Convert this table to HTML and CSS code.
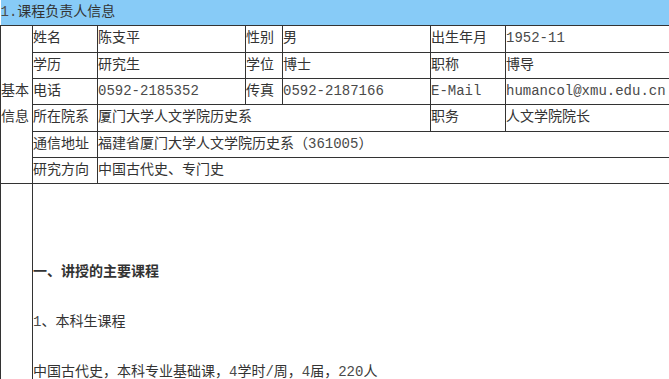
FILE: index.html
```html
<!DOCTYPE html>
<html lang="zh-CN">
<head>
<meta charset="utf-8">
<title>课程负责人信息</title>
<link rel="stylesheet" href="styles.css">
</head>
<body>
<table class="info">
  <colgroup>
    <col class="c1"><col class="c2"><col class="c3"><col class="c4"><col class="c5"><col class="c6"><col class="c7">
  </colgroup>
  <tr class="head-row">
    <td class="head" colspan="7"><span class="mono">1.</span>课程负责人信息</td>
  </tr>
  <tr class="r1">
    <td class="side" rowspan="6">基本信息</td>
    <td>姓名</td><td>陈支平</td><td>性别</td><td>男</td><td>出生年月</td><td class="mono">1952-11</td>
  </tr>
  <tr class="r2">
    <td>学历</td><td>研究生</td><td>学位</td><td>博士</td><td>职称</td><td>博导</td>
  </tr>
  <tr class="r3">
    <td>电话</td><td class="mono">0592-2185352</td><td>传真</td><td class="mono">0592-2187166</td><td class="mono">E-Mail</td><td class="mono">humancol@xmu.edu.cn</td>
  </tr>
  <tr class="r4">
    <td>所在院系</td><td colspan="3">厦门大学人文学院历史系</td><td>职务</td><td>人文学院院长</td>
  </tr>
  <tr class="r5">
    <td>通信地址</td><td colspan="5">福建省厦门大学人文学院历史系（<span class="mono">361005</span>）</td>
  </tr>
  <tr class="r6">
    <td>研究方向</td><td colspan="5">中国古代史、专门史</td>
  </tr>
  <tr class="body-row">
    <td class="blank"></td>
    <td class="content" colspan="6">
      <div class="line strong">一、讲授的主要课程</div>
      <div class="line"><span class="mono">1</span>、本科生课程</div>
      <div class="line">中国古代史，本科专业基础课，<span class="mono">4</span>学时<span class="mono">/</span>周，<span class="mono">4</span>届，<span class="mono">220</span>人</div>
      <div class="line">中国历史文选，本科专业基础课</div>
    </td>
  </tr>
</table>
</body>
</html>
```
FILE: styles.css
```css
html, body {
  margin: 0;
  padding: 0;
  overflow: hidden;
  background: #ffffff;
}
body {
  font-family: "Liberation Mono", "Noto Sans CJK SC", monospace;
  font-size: 14px;
  color: #333333;
}
.info {
  border-collapse: collapse;
  table-layout: fixed;
  width: 720px;
}
.c1 { width: 32px; }
.c2 { width: 65px; }
.c3 { width: 148px; }
.c4 { width: 37px; }
.c5 { width: 148px; }
.c6 { width: 75px; }
.c7 { width: 215px; }
.info td {
  border: 1px solid #333333;
  padding: 0 1px 0 0;
  line-height: 25px;
  vertical-align: middle;
  white-space: nowrap;
  overflow: hidden;
}
.head-row { height: 25px; }
.info td.head {
  background: #87cbf7;
  border-top: none;
  border-left: none;
  border-right: none;
  line-height: 24px;
}
.r1, .r4 { height: 27px; }
.r2, .r3, .r5, .r6 { height: 26px; }
.info td.side {
  white-space: normal;
  line-height: 26px;
  font-size: 14px;
}
.mono {
  font-family: "Liberation Mono", monospace;
  color: #4a4a4a;
}
.body-row { height: 260px; }
.info td.blank { vertical-align: top; }
.info td.content {
  vertical-align: top;
  padding-top: 63px;
}
.line {
  line-height: 50px;
  height: 50px;
}
.strong { font-weight: bold; }
```
